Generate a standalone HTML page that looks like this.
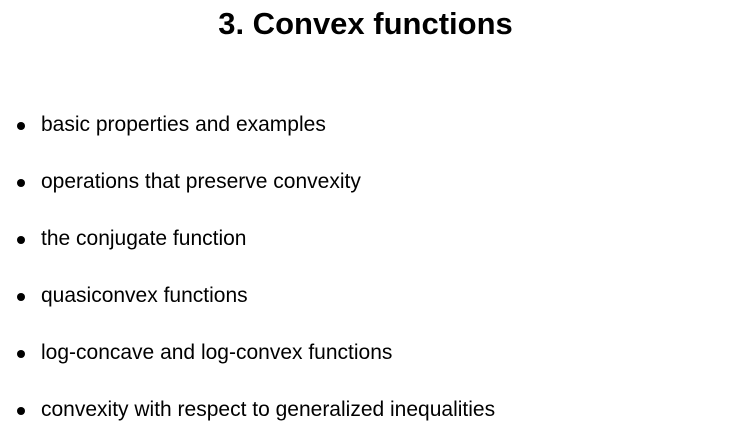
<!DOCTYPE html>
<html><head><style>
html,body{margin:0;padding:0;background:#fff;}
body{width:731px;height:441px;position:relative;overflow:hidden;font-family:"Liberation Sans",sans-serif;color:#000;}
h1{position:absolute;left:0;width:731px;top:5px;margin:0;text-align:center;font-size:31px;font-weight:bold;letter-spacing:0px;line-height:38px;padding-left:0px;}
.b{position:absolute;left:41px;font-size:21px;line-height:24px;white-space:nowrap;}
.d{position:absolute;left:17px;width:8px;height:8px;border-radius:50%;background:#000;}
</style></head><body>
<h1>3. Convex functions</h1>
<div class="d" style="top:122px"></div><div class="b" style="top:113px">basic properties and examples</div>
<div class="d" style="top:179px"></div><div class="b" style="top:170px">operations that preserve convexity</div>
<div class="d" style="top:236px"></div><div class="b" style="top:227px">the conjugate function</div>
<div class="d" style="top:293px"></div><div class="b" style="top:284px">quasiconvex functions</div>
<div class="d" style="top:350px"></div><div class="b" style="top:341px">log-concave and log-convex functions</div>
<div class="d" style="top:407px"></div><div class="b" style="top:398px">convexity with respect to generalized inequalities</div>
</body></html>
